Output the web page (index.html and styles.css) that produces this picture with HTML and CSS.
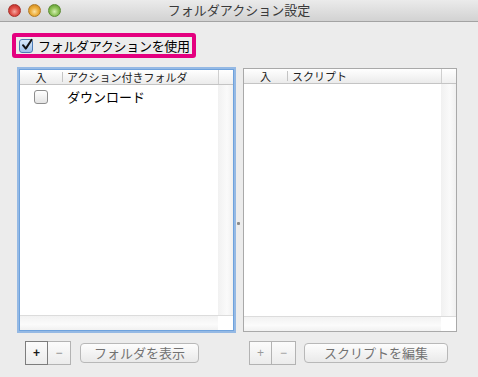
FILE: index.html
```html
<!DOCTYPE html>
<html lang="ja">

<head>
    <meta charset="UTF-8">
    <meta name="viewport" content="width=device-width, initial-scale=1.0">
    <title>フォルダアクション設定</title>
    <link rel="stylesheet" href="styles.css">
</head>

<body>
    <div class="window">
        <div class="titlebar">
            <div class="lights">
                <span class="light red"></span>
                <span class="light yellow"></span>
                <span class="light green"></span>
            </div>
            <div class="title">フォルダアクション設定</div>
        </div>

        <div class="enable-row">
            <label class="enable-box">
                <span class="check checked">
                    <svg width="14" height="14" viewBox="0 0 14 14">
                        <path d="M3 7.2 L5.8 10.6 L11.6 1.8" fill="none" stroke="#111" stroke-width="2" stroke-linecap="round" stroke-linejoin="round" />
                    </svg>
                </span>
                <span class="enable-text">フォルダアクションを使用</span>
            </label>
        </div>

        <div class="panes">
            <div class="table focused">
                <div class="thead">
                    <div class="th col-on">入</div>
                    <div class="divider"></div>
                    <div class="th col-name">アクション付きフォルダ</div>
                    <div class="th col-corner"></div>
                </div>
                <div class="tbody">
                    <div class="rows">
                        <div class="row">
                            <div class="col-on"><span class="check"></span></div>
                            <div class="col-name row-text">ダウンロード</div>
                        </div>
                    </div>
                    <div class="vscroll"></div>
                </div>
                <div class="hscroll">
                    <div class="hbar"></div>
                    <div class="corner"></div>
                </div>
            </div>

            <div class="splitter"><span class="grip"></span></div>

            <div class="table right">
                <div class="thead">
                    <div class="th col-on">入</div>
                    <div class="divider"></div>
                    <div class="th col-name">スクリプト</div>
                    <div class="th col-corner"></div>
                </div>
                <div class="tbody">
                    <div class="rows"></div>
                    <div class="vscroll"></div>
                </div>
                <div class="hscroll">
                    <div class="hbar"></div>
                    <div class="corner"></div>
                </div>
            </div>
        </div>

        <div class="button-bar">
            <div class="segment">
                <div class="seg-btn active">+</div>
                <div class="seg-btn">−</div>
            </div>
            <div class="push-btn folder-btn">フォルダを表示</div>

            <div class="segment disabled right-seg">
                <div class="seg-btn">+</div>
                <div class="seg-btn">−</div>
            </div>
            <div class="push-btn script-btn">スクリプトを編集</div>
        </div>
    </div>
</body>

</html>
```

FILE: styles.css
```css
:root {
    --window-bg: #ececec;
    --border-color: #a9a9a9;
    --header-line: #c4c4c4;
    --magenta: #e4007f;
    --focus-blue: #6ea2dd;
}

body,
html {
    margin: 0;
    padding: 0;
    font-family: 'Noto Sans CJK JP', 'Noto Sans', sans-serif;
    background-color: var(--window-bg);
    color: #111;
}

.window {
    width: 478px;
    height: 377px;
    overflow: hidden;
    background-color: var(--window-bg);
}

/* title bar */
.titlebar {
    height: 21px;
    border-bottom: 1px solid #a3a3a3;
    background: linear-gradient(#ebebeb, #d2d2d2);
    display: flex;
    align-items: center;
    position: relative;
}

.lights {
    display: flex;
    gap: 7px;
    padding-left: 8px;
}

.light {
    width: 13px;
    height: 13px;
    border-radius: 50%;
    box-sizing: border-box;
}

.red {
    background: radial-gradient(circle at 50% 60%, #f5a9a2 0, #e0514a 45%, #b3231d 100%);
    border: 1px solid #a8302a;
}

.yellow {
    background: radial-gradient(circle at 50% 60%, #fbe2a5 0, #eeae3c 45%, #c47b12 100%);
    border: 1px solid #b27a24;
}

.green {
    background: radial-gradient(circle at 50% 60%, #d6efb3 0, #8fc45a 45%, #4e8e22 100%);
    border: 1px solid #5b8c33;
}

.title {
    position: absolute;
    left: 0;
    right: 0;
    top: 1px;
    text-align: center;
    font-size: 13px;
    line-height: 17px;
    color: #3a3a3a;
}

/* enable checkbox */
.enable-row {
    padding: 11px 0 0 12px;
}

.enable-box {
    display: flex;
    align-items: center;
    gap: 5px;
    width: 184px;
    height: 25px;
    box-sizing: border-box;
    border: 4px solid var(--magenta);
    border-radius: 3px;
    padding-left: 3px;
    font-size: 13px;
    color: #000;
}

.enable-text {
    white-space: nowrap;
    letter-spacing: -0.3px;
}

.check {
    width: 14px;
    height: 14px;
    box-sizing: border-box;
    border: 1px solid #8e8e8e;
    border-radius: 3px;
    background: linear-gradient(#ffffff, #e4e4e4);
    display: inline-block;
    position: relative;
    flex-shrink: 0;
}

.check.checked {
    border-color: #4d7bb5;
    background: linear-gradient(#d8e8f8, #9ec1ea);
}

.check svg {
    position: absolute;
    left: 0;
    top: -2px;
}

/* tables */
.panes {
    display: flex;
    align-items: flex-start;
    margin-top: 10px;
    padding-left: 19px;
}

.table {
    display: flex;
    flex-direction: column;
    box-sizing: border-box;
    border: 1px solid var(--border-color);
    background-color: white;
}

.table.focused {
    width: 215px;
    height: 262px;
    margin-top: 1px;
    border-color: var(--focus-blue);
    box-shadow: 0 0 0 2px rgba(120, 168, 226, 0.75);
}

.table.right {
    width: 214px;
    height: 264px;
}

.thead {
    display: flex;
    align-items: center;
    height: 14px;
    border-bottom: 1px solid var(--header-line);
    background: linear-gradient(#ffffff, #ebebeb);
    font-size: 11px;
    line-height: 14px;
}

.th {
    color: #222;
    white-space: nowrap;
}

.col-on {
    width: 42px;
    text-align: center;
    flex-shrink: 0;
}

.divider {
    width: 1px;
    height: 10px;
    background-color: var(--header-line);
}

.thead .col-name {
    flex: 1;
    padding-left: 4px;
    overflow: hidden;
}

.col-corner {
    width: 14px;
    height: 14px;
    border-left: 1px solid #cfcfcf;
    background: linear-gradient(#ffffff, #efefef);
}

.table.right .col-on {
    width: 43px;
}

.tbody {
    flex: 1;
    display: flex;
}

.rows {
    flex: 1;
    padding-top: 2px;
}

.row {
    display: flex;
    align-items: center;
    height: 18px;
}

.row .col-on {
    display: flex;
    justify-content: center;
    padding-top: 1px;
}

.row-text {
    padding-left: 5px;
    font-size: 13px;
    color: #000;
}

.vscroll {
    width: 15px;
    background: linear-gradient(90deg, #f1f1f1, #fafafa 60%, #f0f0f0);
}

.hscroll {
    display: flex;
    height: 14px;
    border-top: 1px solid #dcdcdc;
}

.hbar {
    flex: 1;
    background: linear-gradient(#f2f2f2, #fbfbfb 60%, #f1f1f1);
}

.corner {
    width: 15px;
    background-color: white;
}

.splitter {
    width: 9px;
    height: 264px;
    display: flex;
    justify-content: center;
    padding-top: 154px;
    box-sizing: border-box;
}

.grip {
    width: 3px;
    height: 3px;
    background-color: #8a8a8a;
    border-radius: 1px;
}

/* bottom buttons */
.button-bar {
    display: flex;
    align-items: center;
    margin-top: 9px;
    padding-left: 25px;
}

.segment {
    display: flex;
    height: 24px;
}

.seg-btn {
    width: 23px;
    height: 24px;
    box-sizing: border-box;
    border: 1px solid #b3b3b3;
    background: linear-gradient(#fbfbfb, #ececec);
    display: flex;
    justify-content: center;
    align-items: center;
    font-family: 'Liberation Sans', sans-serif;
    font-size: 12px;
    color: #8c8c8c;
}

.seg-btn + .seg-btn {
    border-left: none;
}

.seg-btn.active {
    border-color: #7d7d7d;
    color: #1a1a1a;
    font-weight: bold;
}

.segment.disabled .seg-btn {
    color: #9a9a9a;
}

.right-seg {
    margin-left: 50px;
}

.right-seg .seg-btn:last-child {
    width: 24px;
}

.push-btn {
    height: 20px;
    box-sizing: border-box;
    border: 1px solid #b8b8b8;
    border-radius: 4px;
    background: linear-gradient(#fdfdfd, #e9e9e9);
    font-size: 13px;
    line-height: 18px;
    color: #727272;
    text-align: center;
}

.folder-btn {
    width: 119px;
    margin-left: 9px;
}

.script-btn {
    width: 144px;
    margin-left: 8px;
}
```
